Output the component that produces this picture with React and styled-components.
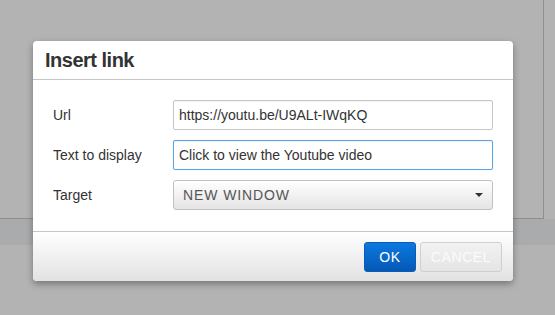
import React from "react";
import styled, { createGlobalStyle } from "styled-components";

const Global = createGlobalStyle`
  html, body {
    margin: 0;
    padding: 0;
    background: #b3b3b3;
    font-family: "Liberation Sans", Arial, sans-serif;
  }
`;

const Screen = styled.div`
  position: relative;
  width: 555px;
  height: 315px;
  overflow: hidden;
  background: #b3b3b3;
`;

const Page = styled.div`
  width: 544px;
  height: 219px;
  background: #b3b3b3;
  border-right: 1px solid #8f8f8f;
  border-bottom: 1px solid #8f8f8f;
  box-sizing: border-box;
`;

const Strip = styled.div`
  height: 26px;
  background: #a9abad;
`;

const Dialog = styled.div`
  position: absolute;
  left: 33px;
  top: 41px;
  width: 480px;
  height: 240px;
  display: flex;
  flex-direction: column;
  background: #fff;
  border-radius: 4px;
  box-shadow: 0 3px 7px rgba(0, 0, 0, 0.35);
  overflow: hidden;
`;

const Header = styled.div`
  height: 38px;
  flex: none;
  display: flex;
  align-items: center;
  padding-left: 12px;
  border-bottom: 1px solid #c5c5c5;
`;

const Title = styled.h1`
  margin: 0;
  font-size: 20px;
  font-weight: bold;
  letter-spacing: -0.5px;
  color: #333;
`;

const Body = styled.div`
  flex: 1;
  display: flex;
  flex-direction: column;
  gap: 10px;
  padding: 20px 20px 0 20px;
`;

const Row = styled.div`
  display: flex;
  align-items: center;
  height: 30px;
`;

const Label = styled.label`
  width: 120px;
  flex: none;
  font-size: 14px;
  color: #333;
`;

const Input = styled.div`
  flex: 1;
  height: 30px;
  box-sizing: border-box;
  display: flex;
  align-items: center;
  padding-left: 5px;
  font-size: 14px;
  color: #333;
  background: #fff;
  border: 1px solid ${({ focused }) => (focused ? "#59a5e5" : "#c5c5c5")};
  border-radius: 2px;
  box-shadow: ${({ focused }) =>
    focused ? "inset 0 1px 1px rgba(0,0,0,0.06), 0 0 1px rgba(89,165,229,0.4)" : "inset 0 1px 1px rgba(0,0,0,0.04)"};
`;

const Select = styled.div`
  flex: 1;
  height: 30px;
  box-sizing: border-box;
  display: flex;
  align-items: center;
  justify-content: space-between;
  padding: 0 9px 0 9px;
  font-size: 14px;
  letter-spacing: 0.9px;
  color: #555;
  background: linear-gradient(#ffffff, #e4e4e4);
  border: 1px solid #c0c0c0;
  border-radius: 3px;
`;

const Caret = styled.span`
  width: 0;
  height: 0;
  border-left: 4px solid transparent;
  border-right: 4px solid transparent;
  border-top: 4px solid #333;
`;

const Footer = styled.div`
  height: 50px;
  flex: none;
  box-sizing: border-box;
  display: flex;
  justify-content: flex-end;
  align-items: flex-start;
  gap: 4px;
  padding: 10px 11px 0 0;
  border-top: 1px solid #c5c5c5;
  background: linear-gradient(#ffffff, #e2e2e2);
`;

const Button = styled.button`
  height: 30px;
  width: ${({ w }) => w}px;
  box-sizing: border-box;
  font-family: "Liberation Sans", Arial, sans-serif;
  font-size: 14px;
  letter-spacing: 0.6px;
  border-radius: 3px;
  padding: 0;
  color: ${({ primary }) => (primary ? "#fff" : "#fbfbfb")};
  border: 1px solid ${({ primary }) => (primary ? "#0b5cb5" : "#cfcfcf")};
  background: ${({ primary }) =>
    primary ? "linear-gradient(#0b79e0, #0558b5)" : "linear-gradient(#f2f2f2, #e4e4e4)"};
`;

export default function App() {
  return (
    <Screen>
      <Global />
      <Page />
      <Strip />
      <Dialog>
        <Header>
          <Title>Insert link</Title>
        </Header>
        <Body>
          <Row>
            <Label>Url</Label>
            <Input>https://youtu.be/U9ALt-IWqKQ</Input>
          </Row>
          <Row>
            <Label>Text to display</Label>
            <Input focused>Click to view the Youtube video</Input>
          </Row>
          <Row>
            <Label>Target</Label>
            <Select>
              NEW WINDOW
              <Caret />
            </Select>
          </Row>
        </Body>
        <Footer>
          <Button primary w={52}>OK</Button>
          <Button w={82}>CANCEL</Button>
        </Footer>
      </Dialog>
    </Screen>
  );
}
